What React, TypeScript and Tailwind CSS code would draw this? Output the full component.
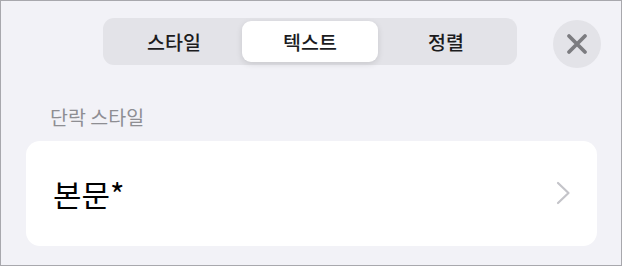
import { useState } from "react";

// 상단 탭 목록
const tabs = ["스타일", "텍스트", "정렬"];

export default function App() {
  const [active, setActive] = useState<number>(1);

  return (
    <div
      className="w-[622px] h-[269px] bg-white"
      style={{ fontFamily: '"Noto Sans CJK KR", "Noto Sans", sans-serif' }}
    >
      <div className="w-[622px] h-[266px] border border-[#a8a8ad] bg-[#f2f2f7] flex flex-col">
        {/* 헤더: 세그먼트 컨트롤 + 닫기 버튼 */}
        <div className="flex items-start pt-[17px]">
          <div className="ml-[102px] w-[414px] h-[47px] rounded-[11px] bg-[#e3e3e8] p-[3px] flex">
            {tabs.map((tab, index) => (
              <button
                key={tab}
                type="button"
                onClick={() => setActive(index)}
                className={
                  index === active
                    ? "flex-1 rounded-[9px] bg-white shadow-[0_2px_6px_rgba(0,0,0,0.12)] text-[19.5px] font-medium text-[#1c1c1e] leading-none"
                    : "flex-1 rounded-[9px] text-[19.5px] font-medium text-[#1c1c1e] leading-none"
                }
              >
                {tab}
              </button>
            ))}
          </div>
          <button
            type="button"
            className="ml-[36px] mt-[2px] w-12 h-12 rounded-full bg-[#e3e3e8] flex items-center justify-center"
          >
            <svg width="22" height="22" viewBox="0 0 22 22">
              <path
                d="M3 3 L19 19 M19 3 L3 19"
                stroke="#7c7c80"
                strokeWidth="3.8"
                strokeLinecap="round"
              />
            </svg>
          </button>
        </div>

        {/* 섹션 제목 */}
        <div className="pl-[49px] mt-[39px] text-[19.5px] text-[#8e8e93] leading-none">
          단락 스타일
        </div>

        {/* 단락 스타일 카드 */}
        <div className="mt-[14px] ml-[25px] w-[571px] h-[105px] rounded-[14px] bg-white flex items-center pl-[27px] pr-[26px]">
          <span className="text-[31px] text-black leading-none flex-1">본문*</span>
          <svg width="15" height="24" viewBox="0 0 15 24">
            <path
              d="M2 2 L12.5 12 L2 22"
              fill="none"
              stroke="#c4c4c9"
              strokeWidth="2.2"
              strokeLinecap="round"
              strokeLinejoin="round"
            />
          </svg>
        </div>
      </div>
    </div>
  );
}
